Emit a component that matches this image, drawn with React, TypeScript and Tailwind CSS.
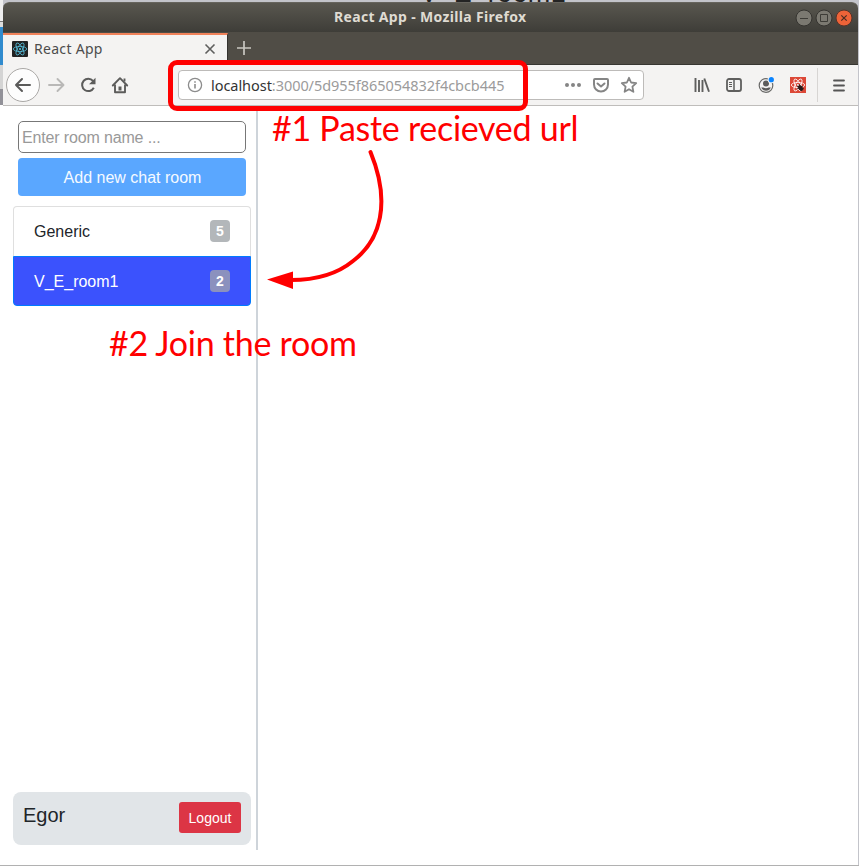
import React from "react";

function ReactMark({ className, stroke }: { className: string; stroke: string }) {
  return (
    <svg viewBox="0 0 16 16" className={className} fill="none" stroke={stroke} strokeWidth=".8">
      <ellipse cx="8" cy="8" rx="6.7" ry="2.6" />
      <ellipse cx="8" cy="8" rx="6.7" ry="2.6" transform="rotate(60 8 8)" />
      <ellipse cx="8" cy="8" rx="6.7" ry="2.6" transform="rotate(120 8 8)" />
      <circle cx="8" cy="8" r="1.1" fill={stroke} stroke="none" />
    </svg>
  );
}

function TitleBar() {
  return (
    <header className="relative flex h-[30px] items-center justify-end gap-[2px] rounded-t-[6px] border-t border-[#66645d] bg-gradient-to-b from-[#59574f] to-[#3e3d38] pr-[5px]">
      <span className="absolute left-[331px] top-[3px] whitespace-nowrap text-[14px] leading-[22px] font-bold tracking-[0.33px] text-[#dfdbd2]">
        React App - Mozilla Firefox
      </span>
      <svg width="18" height="18" viewBox="0 0 18 18">
        <circle cx="9" cy="9" r="8" fill="#7b7971" stroke="#353430" />
        <path d="M5 9.5h8" stroke="#3d3c37" />
      </svg>
      <svg width="18" height="18" viewBox="0 0 18 18">
        <circle cx="9" cy="9" r="8" fill="#7b7971" stroke="#353430" />
        <path d="M5.5 5.5h7v7h-7z" fill="none" stroke="#3d3c37" />
      </svg>
      <svg width="18" height="18" viewBox="0 0 18 18">
        <circle cx="9" cy="9" r="8" fill="#ed6338" stroke="#53342b" />
        <path d="m6.3 6.3 5.4 5.4m0-5.4-5.4 5.4" stroke="#492d22" strokeWidth="1.2" />
      </svg>
    </header>
  );
}

function TabStrip() {
  return (
    <div className="flex h-[33px] border-b border-[#373631] bg-[#504d46]">
      <div className="mt-px flex h-8 w-[225px] shrink-0 items-center border-t-2 border-r border-t-[#f0825a] border-r-[#34332f] bg-[#f4f3f2] pb-[3px] pl-[9px] pr-[11px]">
        <span className="flex size-4 rounded-[1px] bg-[#222]">
          <ReactMark className="size-4" stroke="#56bfdc" />
        </span>
        <span className="ml-[6px] grow whitespace-nowrap text-[14px] leading-5 tracking-[0.3px] text-[#4c4c4c]">
          React App
        </span>
        <svg width="12" height="12" viewBox="0 0 12 12" fill="none" stroke="#5f5f5e" strokeWidth="1.6">
          <path d="m1.5 1.5 9 9m0-9-9 9" />
        </svg>
      </div>
      <svg className="ml-[9px] mt-[9px]" width="14" height="14" viewBox="0 0 14 14" stroke="#c9c7c1" strokeWidth="1.7">
        <path d="M7 0v14M0 7h14" />
      </svg>
    </div>
  );
}

function Toolbar() {
  return (
    <div className="flex h-[41px] items-center border-b border-[#bfbdbb] bg-[#f4f3f2]">
      <span className="ml-[3px] flex size-[34px] shrink-0 items-center justify-center rounded-full border border-[#aaa8a6] bg-[#fdfdfd]">
        <svg width="18" height="16" viewBox="0 0 18 16" fill="none" stroke="#5b5b5a" strokeWidth="2" strokeLinecap="round" strokeLinejoin="round">
          <path d="M16 8H2M8 2 2 8l6 6" />
        </svg>
      </span>
      <svg className="ml-[8px] shrink-0" width="17" height="16" viewBox="0 0 17 16" fill="none" stroke="#b9b8b7" strokeWidth="1.9" strokeLinecap="round" strokeLinejoin="round">
        <path d="M1 8h14M9.5 2l6 6-6 6" />
      </svg>
      <svg className="ml-[15px] shrink-0" width="16" height="16" viewBox="0 0 16 16" fill="none" stroke="#5c5c5b" strokeWidth="2">
        <path d="M13 3.8a6.2 6.2 0 1 0 .8 7" />
        <path d="M15.5.8v6.5H9z" fill="#5c5c5b" stroke="none" />
      </svg>
      <svg className="ml-[15px] shrink-0" width="18" height="18" viewBox="0 0 18 18" fill="none" stroke="#5c5c5b" strokeWidth="1.9" strokeLinejoin="round">
        <path d="m1.8 9.5 7.2-7.3 7.2 7.3" strokeLinecap="round" />
        <path d="M4 8.5v7.7h10V8.5" />
        <path d="M9 14.5v-4" strokeWidth="3" />
        <path d="M13.5 2.5v3" />
      </svg>
      <div className="ml-[49px] flex h-[30px] w-[466px] shrink-0 items-center rounded-[4px] border border-[#bdbbb9] bg-white pl-[8px] pr-[5px]">
        <svg width="16" height="16" viewBox="0 0 16 16" fill="none" stroke="#8c8c8c">
          <circle cx="8" cy="8" r="6.6" strokeWidth="1.3" />
          <path d="M8 7v4.5M8 4.2v1.6" strokeWidth="1.6" />
        </svg>
        <span className="ml-[8px] grow whitespace-nowrap text-[14.5px] leading-5 tracking-[-0.05px] text-[#9b9b9b]">
          <span className="text-[#333]">localhost</span>:3000/5d955f865054832f4cbcb445
        </span>
        <svg width="18" height="6" viewBox="0 0 18 6" fill="#858585">
          <circle cx="3" cy="3" r="2" />
          <circle cx="9" cy="3" r="2" />
          <circle cx="15" cy="3" r="2" />
        </svg>
        <svg className="ml-[10px]" width="18" height="16" viewBox="0 0 18 16" fill="none" stroke="#858585" strokeWidth="2" strokeLinejoin="round" strokeLinecap="round">
          <path d="M3 2h12q1 0 1 1v4.5a7 7 0 0 1-14 0V3q0-1 1-1Z" />
          <path d="m5.5 6.5 3.5 3 3.5-3" />
        </svg>
        <svg className="ml-[10px]" width="18" height="18" viewBox="0 0 18 18" fill="none" stroke="#858585" strokeWidth="1.8" strokeLinejoin="round">
          <path d="m9 1.8 2.1 4.7 5.1.6-3.8 3.5 1 5.2L9 13.2l-4.4 2.6 1-5.2-3.8-3.5 5.1-.6Z" />
        </svg>
      </div>
      <svg className="ml-[50px] shrink-0" width="16" height="16" viewBox="0 0 16 16" stroke="#5f5f5e" strokeWidth="1.9">
        <path d="M1.5 1v14M5 3v12M8.5 3v12M10.3 1.5 15 14.8" />
      </svg>
      <svg className="ml-[15px] shrink-0" width="18" height="16" viewBox="0 0 18 16" fill="none" stroke="#5f5f5e" strokeWidth="1.8">
        <rect x="2" y="2" width="14" height="12" rx="2" />
        <path d="M9 2v12" strokeWidth="1.5" />
        <path d="M4 5.5h3M4 7.5h3M4 9.5h3" strokeWidth="1" />
      </svg>
      <svg className="ml-[14px] shrink-0" width="18" height="18" viewBox="0 0 18 18" fill="none">
        <circle cx="9" cy="9.5" r="6.8" stroke="#696968" strokeWidth="1.2" />
        <circle cx="9" cy="7.4" r="3" fill="#5c5c5b" />
        <path d="M4.2 11.5h2.2q2.6 1.6 5.2 0h2.2a5.2 5.2 0 0 1-9.6 0Z" fill="#5c5c5b" />
        <circle cx="14.3" cy="3.7" r="3.6" fill="#f4f3f2" />
        <circle cx="14.3" cy="3.7" r="2.6" fill="#0a84ff" />
      </svg>
      <span className="relative ml-[15px] flex size-4 shrink-0 bg-[#dc4837]">
        <ReactMark className="size-4" stroke="#fff" />
        <svg className="absolute left-[6px] top-[6px]" width="9" height="9" viewBox="0 0 9 9" stroke="#241b19" strokeWidth=".8">
          <ellipse cx="4.5" cy="5" rx="1.8" ry="2.8" fill="#241b19" transform="rotate(-35 4.5 5)" />
          <path d="m1 3 7 3M3 1l3 7M1 6l6-3" />
        </svg>
      </span>
      <span className="ml-[11px] h-[34px] w-px shrink-0 bg-[#d7d5d3]" />
      <svg className="ml-[15px] shrink-0" width="12" height="13" viewBox="0 0 12 13" stroke="#555" strokeWidth="1.8" strokeLinecap="round">
        <path d="M1 1.5h10M1 6.5h10M1 11.5h10" />
      </svg>
    </div>
  );
}

function Room({ name, count, active }: { name: string; count: number; active?: boolean }) {
  return (
    <li
      className={
        active
          ? "flex h-[50px] items-center justify-between rounded-b-[4px] border border-[#007bff] bg-[#3b52fd] px-5 text-white"
          : "flex h-[50px] items-center justify-between rounded-t-[4px] border border-b-0 border-[#dfdfdf] px-5 pb-px text-[#212529]"
      }
    >
      <span className={active ? "pt-[2px]" : "pt-px"}>{name}</span>
      <span className={active ? "flex h-[22px] w-5 items-center justify-center rounded-[4px] bg-[#8b91be] text-[14px] font-bold" : "flex h-[22px] w-5 items-center justify-center rounded-[4px] bg-[#b3b7ba] text-[14px] font-bold text-white"}>
        {count}
      </span>
    </li>
  );
}

function Sidebar() {
  return (
    <aside className="mt-1 flex h-[740px] w-[255px] flex-col border-r-2 border-[#ced4da] pb-[5px] pl-[10px] pr-[5px] pt-[11px] font-['Liberation_Sans',Arial,sans-serif] text-[16px]">
      <input
        placeholder="Enter room name ..."
        className="mx-[5px] h-8 rounded-[5px] border border-[#777] bg-white px-[3px] pt-[2px] text-[16px] tracking-[-0.15px] placeholder:text-[#999]"
      />
      <button className="mx-[5px] mt-[5px] h-[38px] rounded-[4px] bg-[#5aa7ff] pl-[1px] pt-[2px] text-[#f5faff]">Add new chat room</button>
      <ul className="mt-[10px]">
        <Room name="Generic" count={5} />
        <Room name="V_E_room1" count={2} active />
      </ul>
      <footer className="mt-auto flex h-[53px] items-start justify-between rounded-[8px] bg-[#e1e5e8] p-[10px]">
        <span className="pt-px text-[20px] leading-6 text-[#212529]">Egor</span>
        <button className="h-[31px] w-[62px] rounded-[3px] bg-[#dc3545] pt-[2px] text-[14px] text-white">Logout</button>
      </footer>
    </aside>
  );
}

function Annotations() {
  return (
    <div className="pointer-events-none absolute inset-0 font-['Lato','Open_Sans',sans-serif] text-[#f00]">
      <div className="absolute left-[168px] top-[60px] h-[51px] w-[360px] rounded-[9px] border-[5px] border-[#f00]" />
      <span className="absolute left-[272px] top-[106px] whitespace-nowrap text-[34px] leading-[44px] tracking-[-0.28px]">
        #1 Paste recieved url
      </span>
      <span className="absolute left-[109px] top-[321px] whitespace-nowrap text-[34px] leading-[44px] tracking-[-0.28px]">
        #2 Join the room
      </span>
      <svg className="absolute left-[260px] top-[145px]" width="130" height="150" viewBox="260 145 130 150">
        <path d="M370.5 152C391 202 381 240 353 261C336 275 314 280 291 280" fill="none" stroke="#f00" strokeWidth="4" strokeLinecap="round" />
        <path d="m267 279.5 26-8v17.5Z" fill="#f00" />
      </svg>
    </div>
  );
}

export default function App() {
  return (
    <div className="relative flex h-[866px] w-[859px] overflow-hidden bg-[#c3c4ca] font-['Noto_Sans','Open_Sans',sans-serif]">
      <span className="absolute left-[420px] top-[-19px] whitespace-nowrap font-['Liberation_Sans',Arial,sans-serif] text-[27px] leading-[24px] tracking-[0.4px] text-[#242424]">
        V_E_room1
      </span>
      <div className="flex w-[3px] shrink-0 flex-col">
        <div className="h-[22px] border-b border-[#777] bg-[#eee]" />
        <div className="h-[5px] bg-[#ddd]" />
        <div className="h-[38px] bg-[#318bce]" />
        <div className="h-[24px] bg-[#d4d4d4]" />
        <div className="h-[16px] bg-[#929198]" />
        <div className="grow bg-white" />
      </div>
      <main className="relative mt-[2px] flex h-[863px] w-[855px] shrink-0 flex-col rounded-t-[6px] bg-white">
        <TitleBar />
        <TabStrip />
        <Toolbar />
        <Sidebar />
      </main>
      <div className="absolute bottom-0 left-0 h-px w-full bg-[#b1b1b1]" />
      <Annotations />
    </div>
  );
}
